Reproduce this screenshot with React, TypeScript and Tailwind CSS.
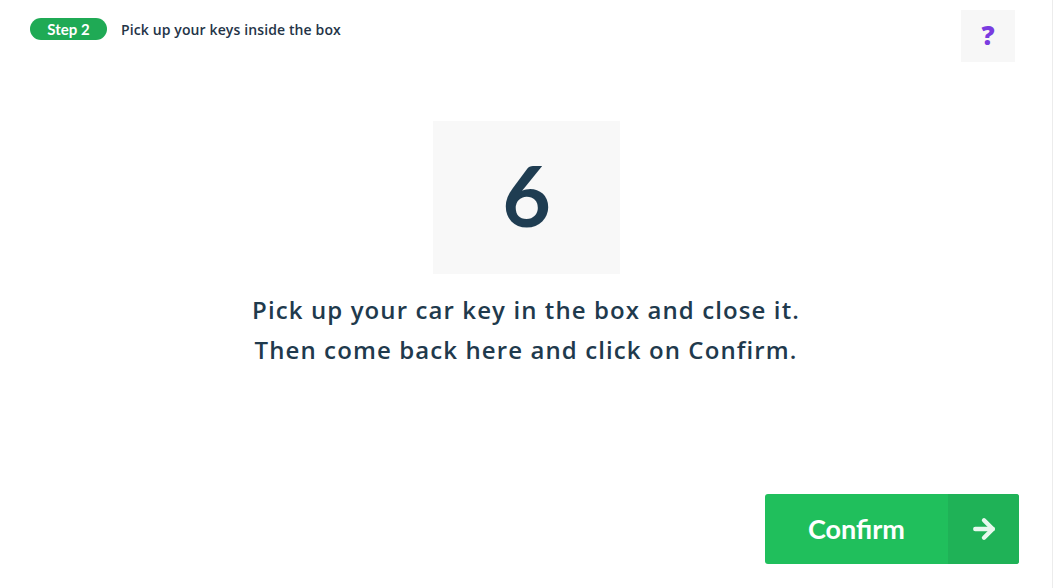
import { ArrowRight } from "lucide-react";

export default function App() {
  return (
    <div className="flex h-[588px] w-[1055px] bg-white font-['Lato','Noto_Sans',sans-serif] text-[#1f3a4d]">
      <div className="flex h-full w-[1053px] flex-col border-r border-[#ececec]">
        {/* header */}
        <div className="flex items-start justify-between pl-[30px] pr-[37px] pt-[10px]">
          <div className="mt-[8px] flex items-center gap-[14px]">
            <span className="flex h-[22px] w-[77px] items-center justify-center rounded-full bg-[#1faa55] text-[15px] font-bold text-white">
              Step 2
            </span>
            <span className="font-['Open_Sans',sans-serif] text-[14px] font-semibold tracking-[0.12px] text-[#243447]">
              Pick up your keys inside the box
            </span>
          </div>
          <button className="flex h-[52px] w-[54px] items-center justify-center bg-[#f7f7f7] pb-[2px] font-['Open_Sans',sans-serif] text-[26px] font-extrabold text-[#7a3ce0]">
            ?
          </button>
        </div>

        {/* code */}
        <div className="mt-[59px] flex flex-col items-center">
          <div className="flex h-[153px] w-[187px] items-center justify-center bg-[#f8f8f8] pb-[6px] pl-[1px]">
            <span className="text-[84px] font-bold leading-none text-[#1f3d52]">6</span>
          </div>
          <p className="mt-[16px] text-center font-['Open_Sans',sans-serif] text-[24px] font-semibold leading-[40px] tracking-[1.1px]">
            Pick up your car key in the box and close it.
            <br />
            Then come back here and click on Confirm.
          </p>
        </div>

        {/* footer */}
        <div className="mt-auto flex justify-end pb-[24px] pr-[33px]">
          <button className="flex h-[70px] w-[254px] overflow-hidden rounded-[3px] bg-[#20bf5c] text-white">
            <span className="flex flex-1 items-center justify-center text-[27px] font-bold">Confirm</span>
            <span className="flex w-[71px] items-center justify-center bg-[#1fb257]">
              <ArrowRight size={30} strokeWidth={3.5} className="text-[#e8f8ee]" />
            </span>
          </button>
        </div>
      </div>
    </div>
  );
}
